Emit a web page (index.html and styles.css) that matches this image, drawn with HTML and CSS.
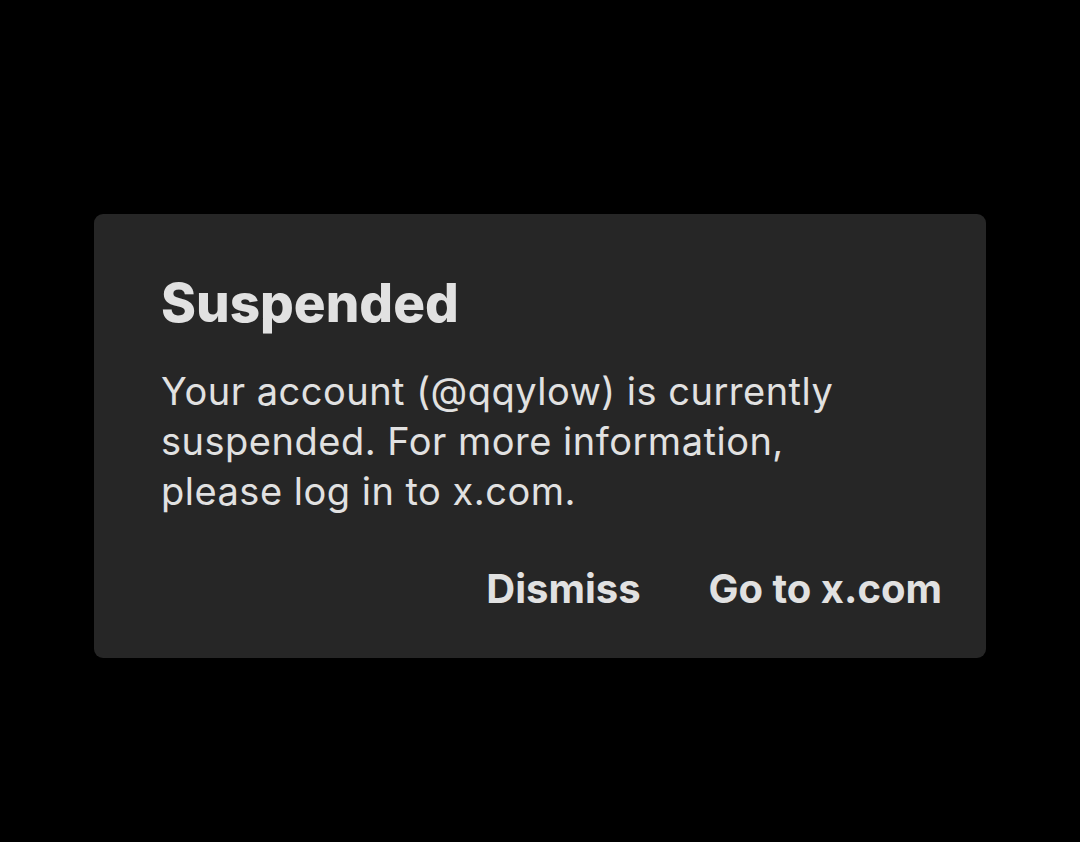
FILE: index.html
```html
<!DOCTYPE html>
<html lang="en">
<head>
<meta charset="utf-8">
<title>Suspended</title>
<link rel="stylesheet" href="styles.css">
</head>
<body>
<div class="dialog" role="dialog">
  <h1 class="title">Suspended</h1>
  <p class="message">Your account (@qqylow) is currently<br>suspended. For more information,<br>please log in to x.com.</p>
  <div class="actions">
    <button class="action">Dismiss</button>
    <button class="action">Go to x.com</button>
  </div>
</div>
</body>
</html>
```
FILE: styles.css
```css
html, body {
  margin: 0;
  padding: 0;
  background: #000;
}
body {
  width: 1080px;
  height: 842px;
  font-family: Inter, "Noto Sans", sans-serif;
  color: #e1e1e1;
  padding-top: 214px;
  box-sizing: border-box;
}
.dialog {
  margin-left: 94px;
  width: 892px;
  height: 444px;
  box-sizing: border-box;
  background: #262626;
  border-radius: 9px;
  padding: 59px 44px 0 67px;
  display: flex;
  flex-direction: column;
}
.title {
  margin: 0;
  font-size: 53px;
  line-height: 61px;
  font-weight: 800;
  letter-spacing: 0;
}
.message {
  margin: 32px 0 0;
  font-size: 38px;
  line-height: 50px;
  font-weight: 400;
  letter-spacing: 0.5px;
}
.actions {
  margin-top: 49px;
  display: flex;
  justify-content: flex-end;
  gap: 68px;
}
.action {
  background: none;
  border: 0;
  padding: 0;
  color: #e1e1e1;
  font-family: inherit;
  font-size: 40px;
  line-height: 48px;
  font-weight: 700;
  letter-spacing: 0;
}
```
